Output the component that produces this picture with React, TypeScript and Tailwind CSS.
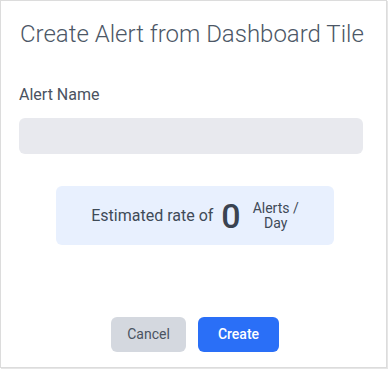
const App = () => {
  return (
    <div className="w-[388px] h-[369px] bg-white font-['Roboto',sans-serif]">
      <div className="w-[387px] h-[368px] border border-[#dcdcdc] shadow-[1px_1px_0_#e6e6e6] flex flex-col pl-[18px] pr-[23px]">
        <h2 className="pt-[19px] pl-[1px] text-[24px] leading-[28px] font-light text-[#4c5766] whitespace-nowrap">
          Create Alert from Dashboard Tile
        </h2>

        <label className="mt-[37px] text-[16px] leading-[20px] font-normal text-[#4a5260]">Alert Name</label>
        <input
          type="text"
          className="mt-[13px] h-[36px] w-full rounded-md bg-[#e8e9ee] outline-none px-3 text-sm"
        />

        <div className="mt-[32px] ml-[37px] h-[59px] w-[278px] rounded-md bg-[#e8f0fe] flex items-center justify-center gap-2 text-[#3f4a57]">
          <span className="text-[16px]">Estimated rate of</span>
          <span className="text-[34px] leading-none font-medium text-[#3a4350]">0</span>
          <span className="text-[14px] leading-[15px] text-center ml-1">
            Alerts /<br />Day
          </span>
        </div>

        <div className="mt-auto mb-[15px] pl-[92px] flex gap-3">
          <button className="h-[35px] w-[75px] rounded-md bg-[#d4d8df] text-[14px] text-[#4a5361]">
            Cancel
          </button>
          <button className="h-[35px] w-[81px] rounded-md bg-[#2a6ff7] text-[14px] font-medium text-white">
            Create
          </button>
        </div>
      </div>
    </div>
  );
};

export default App;
